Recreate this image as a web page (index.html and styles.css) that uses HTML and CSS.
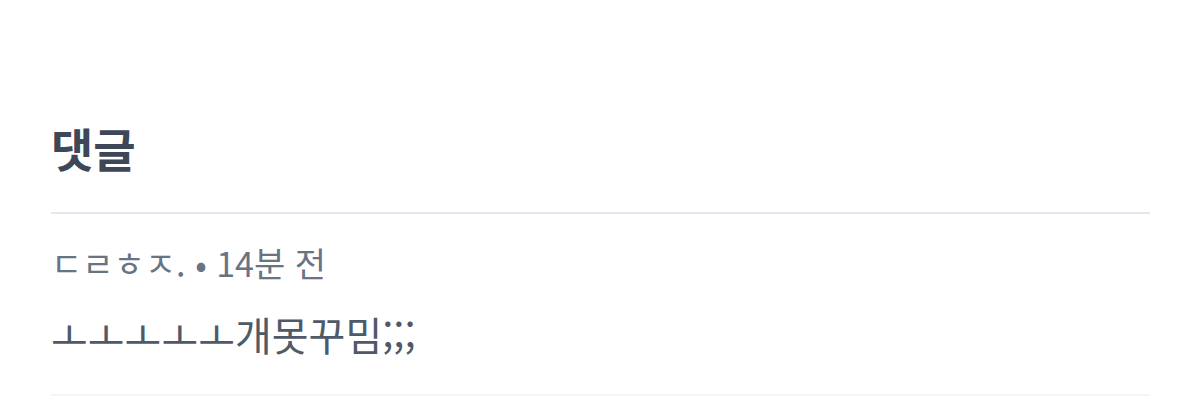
FILE: index.html
```html
<!DOCTYPE html>
<html lang="ko">
<head>
<meta charset="UTF-8">
<meta name="viewport" content="width=device-width, initial-scale=1.0">
<title>댓글</title>
<link rel="stylesheet" href="styles.css">
</head>
<body>

<section class="comments">
  <h2 class="comments-title">댓글</h2>
  <ul class="comment-list">
    <li class="comment">
      <div class="comment-meta">ㄷㄹㅎㅈ. • 14분 전</div>
      <p class="comment-body">ㅗㅗㅗㅗㅗ개못꾸밈;;;</p>
    </li>
  </ul>
</section>

</body>
</html>
```

FILE: styles.css
```css
body {
  margin: 0;
  background-color: #ffffff;
  font-family: "Noto Sans CJK KR", "Noto Sans", sans-serif;
}

.comments {
  padding: 109px 50px 0 51px;
}

.comments-title {
  margin: 0;
  font-size: 46px;
  line-height: 76px;
  font-weight: 700;
  color: #3d4758;
}

.comment-list {
  list-style: none;
  margin: 27px 0 0;
  padding: 0;
  border-top: 2px solid #e2e8f0;
}

.comment {
  padding: 25px 0 32px;
  border-bottom: 2px solid #f3f5f8;
}

.comment-meta {
  font-size: 34px;
  line-height: 48px;
  color: #687384;
}

.comment-body {
  margin: 19px 0 0;
  font-size: 40px;
  line-height: 56px;
  color: #4f5a69;
}
```
